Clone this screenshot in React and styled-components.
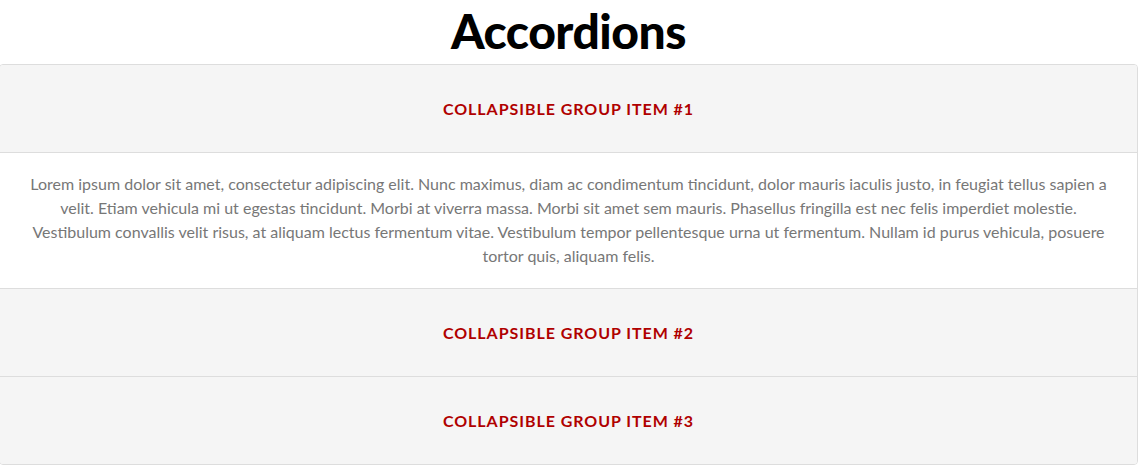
import { useState } from "react";
import styled, { createGlobalStyle } from "styled-components";

const GlobalStyle = createGlobalStyle`
    html, body {
        margin: 0;
        padding: 0;
        background: #fff;
        font-family: Lato, "Liberation Sans", sans-serif;
    }
`

const items = [
    {
        title: "Collapsible Group Item #1",
        text: "Lorem ipsum dolor sit amet, consectetur adipiscing elit. Nunc maximus, diam ac condimentum tincidunt, dolor mauris iaculis justo, in feugiat tellus sapien a velit. Etiam vehicula mi ut egestas tincidunt. Morbi at viverra massa. Morbi sit amet sem mauris. Phasellus fringilla est nec felis imperdiet molestie. Vestibulum convallis velit risus, at aliquam lectus fermentum vitae. Vestibulum tempor pellentesque urna ut fermentum. Nullam id purus vehicula, posuere tortor quis, aliquam felis.",
    },
    {
        title: "Collapsible Group Item #2",
        text: "Lorem ipsum dolor sit amet, consectetur adipiscing elit. Nunc maximus, diam ac condimentum tincidunt, dolor mauris iaculis justo, in feugiat tellus sapien a velit.",
    },
    {
        title: "Collapsible Group Item #3",
        text: "Lorem ipsum dolor sit amet, consectetur adipiscing elit. Nunc maximus, diam ac condimentum tincidunt, dolor mauris iaculis justo, in feugiat tellus sapien a velit.",
    },
]

const App = () => {
    const [open, setOpen] = useState(0);

    return <Page>
        <GlobalStyle />
        <Title>Accordions</Title>
        <Accordion>
            {items.map((item, i) => (
                <Item key={i}>
                    <Header onClick={() => setOpen(open === i ? -1 : i)}>
                        <HeaderTitle>{item.title}</HeaderTitle>
                    </Header>
                    {open === i && <Body>{item.text}</Body>}
                </Item>
            ))}
        </Accordion>
    </Page>;
}

export default App;

const Page = styled.div`
    display: flex;
    flex-direction: column;
`

const Title = styled.h1`
    margin: 0;
    height: 64px;
    display: flex;
    align-items: center;
    justify-content: center;
    font-family: Lato, sans-serif;
    font-weight: 900;
    font-size: 48px;
    color: #000;
    letter-spacing: -0.5px;
    padding: 0 8px 4px 0;
    box-sizing: border-box;
`

const Accordion = styled.div`
    margin: 0 7px 0 -1px;
    border: 1px solid #ddd;
    border-radius: 4px;
    overflow: hidden;
`

const Item = styled.div`
    & + & {
        border-top: 1px solid #ddd;
    }
`

const Header = styled.div`
    height: 87px;
    display: flex;
    align-items: center;
    justify-content: center;
    padding-bottom: 1px;
    box-sizing: border-box;
    background: #f5f5f5;
    cursor: pointer;
`

const HeaderTitle = styled.h4`
    margin: 0;
    font-family: Lato, sans-serif;
    font-weight: 700;
    font-size: 16px;
    letter-spacing: 0.95px;
    text-transform: uppercase;
    color: #b00000;
`

const Body = styled.div`
    border-top: 1px solid #ddd;
    background: #fff;
    padding: 19px 20px 20px;
    font-family: Lato, sans-serif;
    font-size: 16px;
    line-height: 24px;
    color: #777;
    text-align: center;
`
